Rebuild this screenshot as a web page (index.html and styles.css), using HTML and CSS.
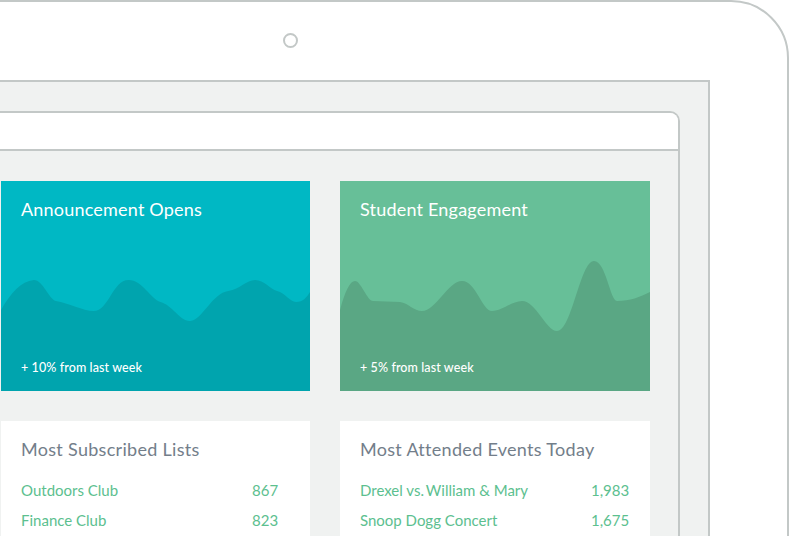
FILE: index.html
```html
<!DOCTYPE html>
<html lang="en">
<head>
<meta charset="utf-8">
<title>Dashboard</title>
<link rel="stylesheet" href="styles.css">
</head>
<body>
<div class="tablet">
  <div class="bezel-top"><span class="camera"></span></div>
  <div class="screen">
    <div class="window">
      <div class="window-bar"></div>
      <div class="window-body">
        <div class="grid">
          <section class="stat stat-teal">
            <svg class="chart" viewBox="0 0 310 210" preserveAspectRatio="none" aria-hidden="true">
              <path d="M0,129 C10,112 20,100 33,99 C42,99 48,118 55,120 C68,122 82,130 93,130 C108,130 112,99 128,99 C142,99 150,118 160,121 C172,124 180,141 190,140 C202,139 212,112 228,110 C240,108 246,99 255,99 C264,99 270,108 277,110 C285,112 290,121 296,121 C303,121 307,116 310,111 L310,210 L0,210 Z"/>
            </svg>
            <div class="stat-content">
              <h2 class="stat-title">Announcement Opens</h2>
              <p class="stat-note">+ 10% from last week</p>
            </div>
          </section>
          <section class="stat stat-green">
            <svg class="chart" viewBox="0 0 310 210" preserveAspectRatio="none" aria-hidden="true">
              <path d="M0,129 C5,110 10,100 15,100 C21,100 27,120 33,120 L60,121 C68,122 74,130 82,130 C96,130 108,100 122,100 C136,100 142,130 152,130 C162,130 172,120 182,120 C196,120 206,150 217,150 C232,150 240,80 254,80 C266,80 270,120 277,120 C290,120 300,116 310,111 L310,210 L0,210 Z"/>
            </svg>
            <div class="stat-content">
              <h2 class="stat-title">Student Engagement</h2>
              <p class="stat-note">+ 5% from last week</p>
            </div>
          </section>
          <section class="list-card">
            <h3 class="list-title">Most Subscribed Lists</h3>
            <ul class="rows">
              <li><span>Outdoors Club</span><span>867</span></li>
              <li><span>Finance Club</span><span>823</span></li>
            </ul>
          </section>
          <section class="list-card">
            <h3 class="list-title">Most Attended Events Today</h3>
            <ul class="rows">
              <li><span>Drexel vs.&#8201;William &amp; Mary</span><span>1,983</span></li>
              <li><span>Snoop Dogg Concert</span><span>1,675</span></li>
            </ul>
          </section>
        </div>
      </div>
    </div>
  </div>
</div>
</body>
</html>
```
FILE: styles.css
```css
* { box-sizing: border-box; }
html, body {
  margin: 0;
  padding: 0;
  background: #ffffff;
  overflow: hidden;
  width: 790px;
  height: 536px;
}
body {
  font-family: "Lato", "Noto Sans", sans-serif;
}
.tablet {
  margin-left: -300px;
  width: 1089px;
  height: 760px;
  border: 2px solid #c3c8c7;
  border-radius: 58px;
  padding: 0 77px 0 100px;
  background: #ffffff;
}
.bezel-top {
  height: 78px;
  padding-top: 31px;
  padding-left: 481px;
}
.camera {
  display: block;
  width: 15px;
  height: 15px;
  border: 2px solid #c3c8c7;
  border-radius: 50%;
}
.screen {
  border: 2px solid #c3c8c7;
  background: #f0f2f1;
  padding: 29px 28px 0 28px;
  height: 700px;
}
.window {
  border: 2px solid #c3c8c7;
  border-bottom: none;
  border-radius: 0 10px 0 0;
  background: #f0f2f1;
  height: 660px;
  overflow: hidden;
}
.window-bar {
  height: 38px;
  background: #ffffff;
  border-bottom: 2px solid #c3c8c7;
}
.window-body {
  padding: 30px 0 0 167px;
}
.grid {
  display: grid;
  grid-template-columns: 309px 310px;
  column-gap: 30px;
  row-gap: 30px;
}
.stat {
  display: grid;
  height: 210px;
  overflow: hidden;
}
.stat > * { grid-area: 1 / 1; }
.stat-teal { background: #00b8c4; }
.stat-teal .chart path { fill: #00a4ae; }
.stat-green { background: #67bf98; }
.stat-green .chart path { fill: #5aa784; }
.chart {
  width: 100%;
  height: 100%;
  display: block;
}
.stat-content {
  display: flex;
  flex-direction: column;
  justify-content: space-between;
  padding: 17px 20px 15px 20px;
  color: #ffffff;
}
.stat-title {
  margin: 0;
  font-size: 18px;
  line-height: 22px;
  font-weight: 400;
  letter-spacing: 0.2px;
}
.stat-note {
  margin: 0;
  font-size: 12.5px;
  line-height: 16px;
  font-weight: 500;
  letter-spacing: 0.1px;
}
.list-card {
  background: #ffffff;
  padding: 17px 20px 10px 20px;
  height: 200px;
}
.list-title {
  margin: 0 0 15px 0;
  font-size: 18px;
  line-height: 22px;
  font-weight: 400;
  color: #737e8a;
  letter-spacing: 0.3px;
}
.rows {
  list-style: none;
  margin: 0;
  padding: 0;
}
.rows li {
  display: grid;
  grid-template-columns: 231px auto;
  font-size: 15px;
  line-height: 30px;
  color: #5cc08f;
}
```
